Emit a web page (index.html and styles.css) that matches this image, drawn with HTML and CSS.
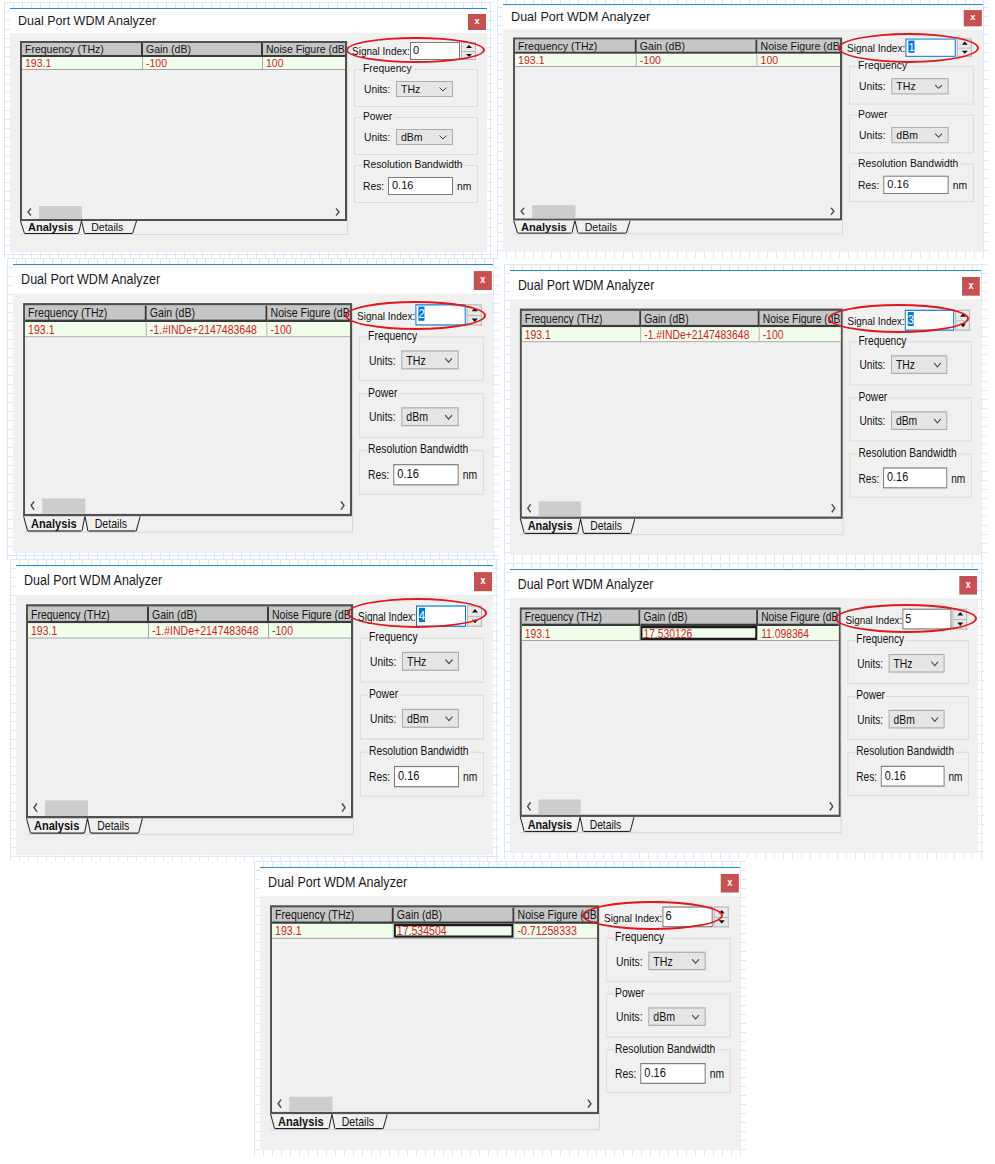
FILE: index.html
```html
<!DOCTYPE html>
<html lang="en">
<head>
    <meta charset="UTF-8">
    <title>Dual Port WDM Analyzer - Signal Index</title>
    <link rel="stylesheet" href="styles.css">
</head>
<body>
    <div class="row row-1">
        <div class="shot s1">
            <div class="win">
                <div class="titlebar"><span class="title">Dual Port WDM Analyzer</span><span class="close">x</span></div>
                <div class="body">
                    <div class="panel">
                        <div class="list">
                            <div class="hdr"><span class="cell c1">Frequency (THz)</span><span class="cell c2">Gain (dB)</span><span class="cell c3">Noise Figure (dB)</span></div>
                            <div class="rec"><span class="cell c1">193.1</span><span class="cell c2">-100</span><span class="cell c3">100</span></div>
                            <div class="list-area"></div>
                            <div class="hscroll">
                                <svg class="arr" width="5" height="8" viewBox="0 0 5 8"><polyline points="4,0.5 1,4 4,7.5"/></svg>
                                <span class="thumb"></span>
                                <svg class="arr arr-r" width="5" height="8" viewBox="0 0 5 8"><polyline points="1,0.5 4,4 1,7.5"/></svg>
                            </div>
                        </div>
                        <div class="tabs">
                            <svg class="slant" width="5" height="13" viewBox="0 0 5 13"><line x1="0.5" y1="0" x2="4.5" y2="12.5"/></svg>
                            <span class="tab active">Analysis</span>
                            <svg class="slant" width="7" height="13" viewBox="0 0 7 13"><polyline points="0.5,12.5 3.5,0 6.5,12.5"/></svg>
                            <span class="tab">Details</span>
                            <svg class="slant" width="5" height="13" viewBox="0 0 5 13"><line x1="0.5" y1="12.5" x2="4.5" y2="0"/></svg>
                        </div>
                    </div>
                    <div class="side">
                        <div class="sig"><span class="sig-label">Signal Index:</span><span class="sig-input">0</span><span class="spin"><i class="up"></i><i class="down"></i></span></div>
                        <div class="grp"><span class="legend">Frequency</span>
                            <div class="field"><label>Units:</label><span class="select">THz<svg width="8" height="5" viewBox="0 0 8 5"><polyline points="0.5,0.5 4,4 7.5,0.5"/></svg></span></div>
                        </div>
                        <div class="grp"><span class="legend">Power</span>
                            <div class="field"><label>Units:</label><span class="select">dBm<svg width="8" height="5" viewBox="0 0 8 5"><polyline points="0.5,0.5 4,4 7.5,0.5"/></svg></span></div>
                        </div>
                        <div class="grp"><span class="legend">Resolution Bandwidth</span>
                            <div class="field res"><label>Res:</label><span class="text-input">0.16</span><span class="unit">nm</span></div>
                        </div>
                    </div>
                </div>
            </div>
            <div class="mark"></div>
        </div>

        <div class="shot s2">
            <div class="win">
                <div class="titlebar"><span class="title">Dual Port WDM Analyzer</span><span class="close">x</span></div>
                <div class="body">
                    <div class="panel">
                        <div class="list">
                            <div class="hdr"><span class="cell c1">Frequency (THz)</span><span class="cell c2">Gain (dB)</span><span class="cell c3">Noise Figure (dB)</span></div>
                            <div class="rec"><span class="cell c1">193.1</span><span class="cell c2">-100</span><span class="cell c3">100</span></div>
                            <div class="list-area"></div>
                            <div class="hscroll">
                                <svg class="arr" width="5" height="8" viewBox="0 0 5 8"><polyline points="4,0.5 1,4 4,7.5"/></svg>
                                <span class="thumb"></span>
                                <svg class="arr arr-r" width="5" height="8" viewBox="0 0 5 8"><polyline points="1,0.5 4,4 1,7.5"/></svg>
                            </div>
                        </div>
                        <div class="tabs">
                            <svg class="slant" width="5" height="13" viewBox="0 0 5 13"><line x1="0.5" y1="0" x2="4.5" y2="12.5"/></svg>
                            <span class="tab active">Analysis</span>
                            <svg class="slant" width="7" height="13" viewBox="0 0 7 13"><polyline points="0.5,12.5 3.5,0 6.5,12.5"/></svg>
                            <span class="tab">Details</span>
                            <svg class="slant" width="5" height="13" viewBox="0 0 5 13"><line x1="0.5" y1="12.5" x2="4.5" y2="0"/></svg>
                        </div>
                    </div>
                    <div class="side">
                        <div class="sig"><span class="sig-label">Signal Index:</span><span class="sig-input sel"><span>1</span></span><span class="spin"><i class="up"></i><i class="down"></i></span></div>
                        <div class="grp"><span class="legend">Frequency</span>
                            <div class="field"><label>Units:</label><span class="select">THz<svg width="8" height="5" viewBox="0 0 8 5"><polyline points="0.5,0.5 4,4 7.5,0.5"/></svg></span></div>
                        </div>
                        <div class="grp"><span class="legend">Power</span>
                            <div class="field"><label>Units:</label><span class="select">dBm<svg width="8" height="5" viewBox="0 0 8 5"><polyline points="0.5,0.5 4,4 7.5,0.5"/></svg></span></div>
                        </div>
                        <div class="grp"><span class="legend">Resolution Bandwidth</span>
                            <div class="field res"><label>Res:</label><span class="text-input">0.16</span><span class="unit">nm</span></div>
                        </div>
                    </div>
                </div>
            </div>
            <div class="mark"></div>
        </div>
    </div>

    <div class="row row-2">
        <div class="shot s3">
            <div class="win">
                <div class="titlebar"><span class="title">Dual Port WDM Analyzer</span><span class="close">x</span></div>
                <div class="body">
                    <div class="panel">
                        <div class="list">
                            <div class="hdr"><span class="cell c1">Frequency (THz)</span><span class="cell c2">Gain (dB)</span><span class="cell c3">Noise Figure (dB)</span></div>
                            <div class="rec"><span class="cell c1">193.1</span><span class="cell c2">-1.#INDe+2147483648</span><span class="cell c3">-100</span></div>
                            <div class="list-area"></div>
                            <div class="hscroll">
                                <svg class="arr" width="5" height="8" viewBox="0 0 5 8"><polyline points="4,0.5 1,4 4,7.5"/></svg>
                                <span class="thumb"></span>
                                <svg class="arr arr-r" width="5" height="8" viewBox="0 0 5 8"><polyline points="1,0.5 4,4 1,7.5"/></svg>
                            </div>
                        </div>
                        <div class="tabs">
                            <svg class="slant" width="5" height="13" viewBox="0 0 5 13"><line x1="0.5" y1="0" x2="4.5" y2="12.5"/></svg>
                            <span class="tab active">Analysis</span>
                            <svg class="slant" width="7" height="13" viewBox="0 0 7 13"><polyline points="0.5,12.5 3.5,0 6.5,12.5"/></svg>
                            <span class="tab">Details</span>
                            <svg class="slant" width="5" height="13" viewBox="0 0 5 13"><line x1="0.5" y1="12.5" x2="4.5" y2="0"/></svg>
                        </div>
                    </div>
                    <div class="side">
                        <div class="sig"><span class="sig-label">Signal Index:</span><span class="sig-input sel"><span>2</span></span><span class="spin"><i class="up"></i><i class="down"></i></span></div>
                        <div class="grp"><span class="legend">Frequency</span>
                            <div class="field"><label>Units:</label><span class="select">THz<svg width="8" height="5" viewBox="0 0 8 5"><polyline points="0.5,0.5 4,4 7.5,0.5"/></svg></span></div>
                        </div>
                        <div class="grp"><span class="legend">Power</span>
                            <div class="field"><label>Units:</label><span class="select">dBm<svg width="8" height="5" viewBox="0 0 8 5"><polyline points="0.5,0.5 4,4 7.5,0.5"/></svg></span></div>
                        </div>
                        <div class="grp"><span class="legend">Resolution Bandwidth</span>
                            <div class="field res"><label>Res:</label><span class="text-input">0.16</span><span class="unit">nm</span></div>
                        </div>
                    </div>
                </div>
            </div>
            <div class="mark"></div>
        </div>

        <div class="shot s4">
            <div class="win">
                <div class="titlebar"><span class="title">Dual Port WDM Analyzer</span><span class="close">x</span></div>
                <div class="body">
                    <div class="panel">
                        <div class="list">
                            <div class="hdr"><span class="cell c1">Frequency (THz)</span><span class="cell c2">Gain (dB)</span><span class="cell c3">Noise Figure (dB)</span></div>
                            <div class="rec"><span class="cell c1">193.1</span><span class="cell c2">-1.#INDe+2147483648</span><span class="cell c3">-100</span></div>
                            <div class="list-area"></div>
                            <div class="hscroll">
                                <svg class="arr" width="5" height="8" viewBox="0 0 5 8"><polyline points="4,0.5 1,4 4,7.5"/></svg>
                                <span class="thumb"></span>
                                <svg class="arr arr-r" width="5" height="8" viewBox="0 0 5 8"><polyline points="1,0.5 4,4 1,7.5"/></svg>
                            </div>
                        </div>
                        <div class="tabs">
                            <svg class="slant" width="5" height="13" viewBox="0 0 5 13"><line x1="0.5" y1="0" x2="4.5" y2="12.5"/></svg>
                            <span class="tab active">Analysis</span>
                            <svg class="slant" width="7" height="13" viewBox="0 0 7 13"><polyline points="0.5,12.5 3.5,0 6.5,12.5"/></svg>
                            <span class="tab">Details</span>
                            <svg class="slant" width="5" height="13" viewBox="0 0 5 13"><line x1="0.5" y1="12.5" x2="4.5" y2="0"/></svg>
                        </div>
                    </div>
                    <div class="side">
                        <div class="sig"><span class="sig-label">Signal Index:</span><span class="sig-input sel"><span>3</span></span><span class="spin"><i class="up"></i><i class="down"></i></span></div>
                        <div class="grp"><span class="legend">Frequency</span>
                            <div class="field"><label>Units:</label><span class="select">THz<svg width="8" height="5" viewBox="0 0 8 5"><polyline points="0.5,0.5 4,4 7.5,0.5"/></svg></span></div>
                        </div>
                        <div class="grp"><span class="legend">Power</span>
                            <div class="field"><label>Units:</label><span class="select">dBm<svg width="8" height="5" viewBox="0 0 8 5"><polyline points="0.5,0.5 4,4 7.5,0.5"/></svg></span></div>
                        </div>
                        <div class="grp"><span class="legend">Resolution Bandwidth</span>
                            <div class="field res"><label>Res:</label><span class="text-input">0.16</span><span class="unit">nm</span></div>
                        </div>
                    </div>
                </div>
            </div>
            <div class="mark"></div>
        </div>
    </div>

    <div class="row row-3">
        <div class="shot s5">
            <div class="win">
                <div class="titlebar"><span class="title">Dual Port WDM Analyzer</span><span class="close">x</span></div>
                <div class="body">
                    <div class="panel">
                        <div class="list">
                            <div class="hdr"><span class="cell c1">Frequency (THz)</span><span class="cell c2">Gain (dB)</span><span class="cell c3">Noise Figure (dB)</span></div>
                            <div class="rec"><span class="cell c1">193.1</span><span class="cell c2">-1.#INDe+2147483648</span><span class="cell c3">-100</span></div>
                            <div class="list-area"></div>
                            <div class="hscroll">
                                <svg class="arr" width="5" height="8" viewBox="0 0 5 8"><polyline points="4,0.5 1,4 4,7.5"/></svg>
                                <span class="thumb"></span>
                                <svg class="arr arr-r" width="5" height="8" viewBox="0 0 5 8"><polyline points="1,0.5 4,4 1,7.5"/></svg>
                            </div>
                        </div>
                        <div class="tabs">
                            <svg class="slant" width="5" height="13" viewBox="0 0 5 13"><line x1="0.5" y1="0" x2="4.5" y2="12.5"/></svg>
                            <span class="tab active">Analysis</span>
                            <svg class="slant" width="7" height="13" viewBox="0 0 7 13"><polyline points="0.5,12.5 3.5,0 6.5,12.5"/></svg>
                            <span class="tab">Details</span>
                            <svg class="slant" width="5" height="13" viewBox="0 0 5 13"><line x1="0.5" y1="12.5" x2="4.5" y2="0"/></svg>
                        </div>
                    </div>
                    <div class="side">
                        <div class="sig"><span class="sig-label">Signal Index:</span><span class="sig-input sel"><span>4</span></span><span class="spin"><i class="up"></i><i class="down"></i></span></div>
                        <div class="grp"><span class="legend">Frequency</span>
                            <div class="field"><label>Units:</label><span class="select">THz<svg width="8" height="5" viewBox="0 0 8 5"><polyline points="0.5,0.5 4,4 7.5,0.5"/></svg></span></div>
                        </div>
                        <div class="grp"><span class="legend">Power</span>
                            <div class="field"><label>Units:</label><span class="select">dBm<svg width="8" height="5" viewBox="0 0 8 5"><polyline points="0.5,0.5 4,4 7.5,0.5"/></svg></span></div>
                        </div>
                        <div class="grp"><span class="legend">Resolution Bandwidth</span>
                            <div class="field res"><label>Res:</label><span class="text-input">0.16</span><span class="unit">nm</span></div>
                        </div>
                    </div>
                </div>
            </div>
            <div class="mark"></div>
        </div>

        <div class="shot s6">
            <div class="win">
                <div class="titlebar"><span class="title">Dual Port WDM Analyzer</span><span class="close">x</span></div>
                <div class="body">
                    <div class="panel">
                        <div class="list">
                            <div class="hdr"><span class="cell c1">Frequency (THz)</span><span class="cell c2">Gain (dB)</span><span class="cell c3">Noise Figure (dB)</span></div>
                            <div class="rec"><span class="cell c1">193.1</span><span class="cell c2 focus">17.530126</span><span class="cell c3">11.098364</span></div>
                            <div class="list-area"></div>
                            <div class="hscroll">
                                <svg class="arr" width="5" height="8" viewBox="0 0 5 8"><polyline points="4,0.5 1,4 4,7.5"/></svg>
                                <span class="thumb"></span>
                                <svg class="arr arr-r" width="5" height="8" viewBox="0 0 5 8"><polyline points="1,0.5 4,4 1,7.5"/></svg>
                            </div>
                        </div>
                        <div class="tabs">
                            <svg class="slant" width="5" height="13" viewBox="0 0 5 13"><line x1="0.5" y1="0" x2="4.5" y2="12.5"/></svg>
                            <span class="tab active">Analysis</span>
                            <svg class="slant" width="7" height="13" viewBox="0 0 7 13"><polyline points="0.5,12.5 3.5,0 6.5,12.5"/></svg>
                            <span class="tab">Details</span>
                            <svg class="slant" width="5" height="13" viewBox="0 0 5 13"><line x1="0.5" y1="12.5" x2="4.5" y2="0"/></svg>
                        </div>
                    </div>
                    <div class="side">
                        <div class="sig"><span class="sig-label">Signal Index:</span><span class="sig-input">5</span><span class="spin"><i class="up"></i><i class="down"></i></span></div>
                        <div class="grp"><span class="legend">Frequency</span>
                            <div class="field"><label>Units:</label><span class="select">THz<svg width="8" height="5" viewBox="0 0 8 5"><polyline points="0.5,0.5 4,4 7.5,0.5"/></svg></span></div>
                        </div>
                        <div class="grp"><span class="legend">Power</span>
                            <div class="field"><label>Units:</label><span class="select">dBm<svg width="8" height="5" viewBox="0 0 8 5"><polyline points="0.5,0.5 4,4 7.5,0.5"/></svg></span></div>
                        </div>
                        <div class="grp"><span class="legend">Resolution Bandwidth</span>
                            <div class="field res"><label>Res:</label><span class="text-input">0.16</span><span class="unit">nm</span></div>
                        </div>
                    </div>
                </div>
            </div>
            <div class="mark"></div>
        </div>
    </div>

    <div class="row row-4">
        <div class="shot s7">
            <div class="win">
                <div class="titlebar"><span class="title">Dual Port WDM Analyzer</span><span class="close">x</span></div>
                <div class="body">
                    <div class="panel">
                        <div class="list">
                            <div class="hdr"><span class="cell c1">Frequency (THz)</span><span class="cell c2">Gain (dB)</span><span class="cell c3">Noise Figure (dB)</span></div>
                            <div class="rec"><span class="cell c1">193.1</span><span class="cell c2 focus">17.534504</span><span class="cell c3">-0.71258333</span></div>
                            <div class="list-area"></div>
                            <div class="hscroll">
                                <svg class="arr" width="5" height="8" viewBox="0 0 5 8"><polyline points="4,0.5 1,4 4,7.5"/></svg>
                                <span class="thumb"></span>
                                <svg class="arr arr-r" width="5" height="8" viewBox="0 0 5 8"><polyline points="1,0.5 4,4 1,7.5"/></svg>
                            </div>
                        </div>
                        <div class="tabs">
                            <svg class="slant" width="5" height="13" viewBox="0 0 5 13"><line x1="0.5" y1="0" x2="4.5" y2="12.5"/></svg>
                            <span class="tab active">Analysis</span>
                            <svg class="slant" width="7" height="13" viewBox="0 0 7 13"><polyline points="0.5,12.5 3.5,0 6.5,12.5"/></svg>
                            <span class="tab">Details</span>
                            <svg class="slant" width="5" height="13" viewBox="0 0 5 13"><line x1="0.5" y1="12.5" x2="4.5" y2="0"/></svg>
                        </div>
                    </div>
                    <div class="side">
                        <div class="sig"><span class="sig-label">Signal Index:</span><span class="sig-input">6</span><span class="spin"><i class="up"></i><i class="down"></i></span></div>
                        <div class="grp"><span class="legend">Frequency</span>
                            <div class="field"><label>Units:</label><span class="select">THz<svg width="8" height="5" viewBox="0 0 8 5"><polyline points="0.5,0.5 4,4 7.5,0.5"/></svg></span></div>
                        </div>
                        <div class="grp"><span class="legend">Power</span>
                            <div class="field"><label>Units:</label><span class="select">dBm<svg width="8" height="5" viewBox="0 0 8 5"><polyline points="0.5,0.5 4,4 7.5,0.5"/></svg></span></div>
                        </div>
                        <div class="grp"><span class="legend">Resolution Bandwidth</span>
                            <div class="field res"><label>Res:</label><span class="text-input">0.16</span><span class="unit">nm</span></div>
                        </div>
                    </div>
                </div>
            </div>
            <div class="mark"></div>
        </div>
    </div>
</body>
</html>
```

FILE: styles.css
```css
body {
    margin: 0;
    background: #fff;
    font-family: "Liberation Sans", Arial, sans-serif;
    color: #111;
}

.row {
    display: flex;
    align-items: flex-start;
}

.row-1 { height: 258px; }
.row-2 { height: 301px; }
.row-3 { height: 302px; }

/* each screenshot sits on a bit of graph paper */
.shot {
    position: relative;
    flex: none;
    box-sizing: border-box;
    padding: 6px;
    background-color: #fff;
    background-image:
        linear-gradient(#dce8f8 1px, transparent 1px),
        linear-gradient(90deg, #dce8f8 1px, transparent 1px);
    background-size: 9px 9px;
}

.s1 { width: 489px; height: 256px; margin: 2px 0 0 4px; }
.s2 { width: 492px; height: 260px; margin: -2px 0 0 4px; }
.s3 { width: 492px; height: 301px; margin: 0 0 0 7px; }
.s4 { width: 483px; height: 297px; margin: 6px 0 0 5px; }
.s5 { width: 489px; height: 302px; margin: 0 0 0 10px; }
.s6 { width: 480px; height: 296px; margin: 4px 0 0 5px; }
.s7 { width: 492px; height: 295px; margin: 0 0 0 254px; }

/* the pasted screenshots are not all the same scale */
.s2 .win { transform: scale(1.006, 1.016); }
.s3 .win { transform: scale(1.006, 1.184); }
.s4 .win { transform: scale(0.987, 1.168); }
.s5 .win { transform: scale(1, 1.189); }
.s6 .win { transform: scale(0.981, 1.164); }
.s7 .win { transform: scale(1.006, 1.16); }

.mark {
    position: absolute;
    box-sizing: border-box;
    border: 2px solid #e3161d;
    border-radius: 50%;
}

.s1 .mark { left: 342px; top: 35px; width: 139px; height: 26px; }
.s2 .mark { left: 341px; top: 35px; width: 141px; height: 30px; }
.s3 .mark { left: 338px; top: 43px; width: 141px; height: 29px; }
.s4 .mark { left: 324px; top: 40px; width: 141px; height: 29px; }
.s5 .mark { left: 337px; top: 39px; width: 140px; height: 30px; }
.s6 .mark { left: 331px; top: 41px; width: 142px; height: 29px; }
.s7 .mark { left: 328px; top: 40px; width: 141px; height: 29px; }

/* window */
.win {
    width: 477px;
    height: 244px;
    box-sizing: border-box;
    border-top: 1px solid #2b88d8;
    background: #f0f0f0;
    transform-origin: 0 0;
    display: flex;
    flex-direction: column;
}

.titlebar {
    height: 24px;
    flex: none;
    background: #fff;
    display: flex;
    align-items: center;
    justify-content: space-between;
    padding: 0 1px 0 8px;
}

.title {
    font-size: 12.5px;
    color: #1a1a1a;
}

.close {
    width: 18px;
    height: 16px;
    margin-top: 2px;
    background: #c75050;
    color: #fff;
    font-size: 9px;
    font-weight: bold;
    line-height: 15px;
    text-align: center;
}

.body {
    flex: 1;
    display: flex;
    align-items: flex-start;
    padding: 8px 0 0 10px;
}

/* list + tabs */
.panel {
    width: 328px;
    height: 194px;
    box-sizing: border-box;
    border-right: 1px solid #dadada;
    border-bottom: 1px solid #dadada;
    display: flex;
    flex-direction: column;
}

.list {
    height: 180px;
    flex: none;
    box-sizing: border-box;
    border: 2px solid #505050;
    display: flex;
    flex-direction: column;
    overflow: hidden;
    font-size: 10.5px;
}

.hdr, .rec {
    display: flex;
    flex: none;
    white-space: nowrap;
}

.cell {
    flex: none;
    box-sizing: border-box;
    padding-left: 3px;
    overflow: hidden;
}

.c1 { width: 121px; }
.c2 { width: 120px; }
.c3 { width: 120px; }

.hdr .cell {
    height: 14px;
    line-height: 12px;
    background: #c6c6c6;
    border-right: 2px solid #3a3a3a;
    border-bottom: 2px solid #3a3a3a;
    color: #151515;
}

.rec .cell {
    height: 13px;
    line-height: 12px;
    background: #effdea;
    border-right: 1px solid #a6a6a6;
    border-bottom: 1px solid #a6a6a6;
    color: #d9202a;
}

.rec .focus {
    box-shadow: inset 0 0 0 2px #1c1c1c;
}

.list-area {
    flex: 1;
    background: #f0f0f0;
}

.hscroll {
    height: 14px;
    flex: none;
    display: flex;
    align-items: center;
    background: #f0f0f0;
}

.arr {
    fill: none;
    stroke: #505050;
    stroke-width: 1.4;
    margin-left: 5px;
}

.arr-r {
    margin: 0 5px 0 auto;
}

.thumb {
    width: 43px;
    height: 13px;
    margin-left: 7px;
    background: #cdcdcd;
}

.tabs {
    height: 13px;
    flex: none;
    display: flex;
}

.slant {
    flex: none;
    fill: none;
    stroke: #222;
    stroke-width: 1;
}

.tab {
    height: 13px;
    box-sizing: border-box;
    border-bottom: 1px solid #222;
    line-height: 12px;
    font-size: 10.5px;
    padding: 0 9px 0 6px;
}

.tab.active {
    font-size: 11px;
    font-weight: bold;
    padding: 0 5px 0 3px;
}

/* right column */
.side {
    width: 128px;
    margin-left: 3px;
    font-size: 10.3px;
}

.sig {
    display: flex;
    align-items: center;
    height: 18px;
    margin-top: 1px;
    padding-left: 1px;
}

.sig-label {
    flex: none;
    width: 57px;
    font-size: 10px;
    white-space: nowrap;
}

.sig-input {
    flex: none;
    width: 50px;
    height: 18px;
    box-sizing: border-box;
    margin-left: 1px;
    padding-left: 2px;
    border: 1px solid #7a7a7a;
    background: #fff;
    font-size: 11px;
    line-height: 15px;
}

.sig-input.sel {
    border-color: #0078d7;
}

.sig-input.sel span {
    background: #0078d7;
    color: #fff;
}

.spin {
    flex: none;
    width: 15px;
    height: 18px;
    margin-left: 1px;
    display: flex;
    flex-direction: column;
}

.spin i {
    flex: 1;
    border: 1px solid #b8b8b8;
    background: #e8e8e8;
    display: flex;
    align-items: center;
    justify-content: center;
}

.spin i + i {
    border-top: none;
}

.spin i::before {
    content: "";
    border-left: 3px solid transparent;
    border-right: 3px solid transparent;
}

.spin .up::before { border-bottom: 3px solid #111; }
.spin .down::before { border-top: 3px solid #111; }

.grp {
    width: 124px;
    height: 38px;
    box-sizing: border-box;
    margin: 9px 0 0 3px;
    padding-left: 7px;
    border: 1px solid #dcdcdc;
}

.grp + .grp {
    margin-top: 10px;
}

.legend {
    display: table;
    height: 12px;
    line-height: 12px;
    margin-top: -7px;
    padding: 0 1px;
    background: #f0f0f0;
    white-space: nowrap;
}

.field {
    display: flex;
    align-items: center;
    height: 16px;
    margin-top: 6px;
    padding-left: 2px;
}

.field label {
    flex: none;
    width: 32px;
}

.select {
    flex: none;
    width: 57px;
    height: 16px;
    box-sizing: border-box;
    border: 1px solid #adadad;
    background: #e5e5e5;
    display: flex;
    align-items: center;
    justify-content: space-between;
    padding: 0 5px 0 4px;
    font-size: 10.5px;
}

.select svg {
    fill: none;
    stroke: #444;
    stroke-width: 1;
}

.field.res {
    height: 18px;
    padding-left: 1px;
}

.field.res label {
    width: 25px;
}

.text-input {
    flex: none;
    width: 65px;
    height: 18px;
    box-sizing: border-box;
    border: 1px solid #7a7a7a;
    background: #fff;
    padding-left: 3px;
    font-size: 11px;
    line-height: 15px;
}

.unit {
    margin-left: 4px;
}
```
